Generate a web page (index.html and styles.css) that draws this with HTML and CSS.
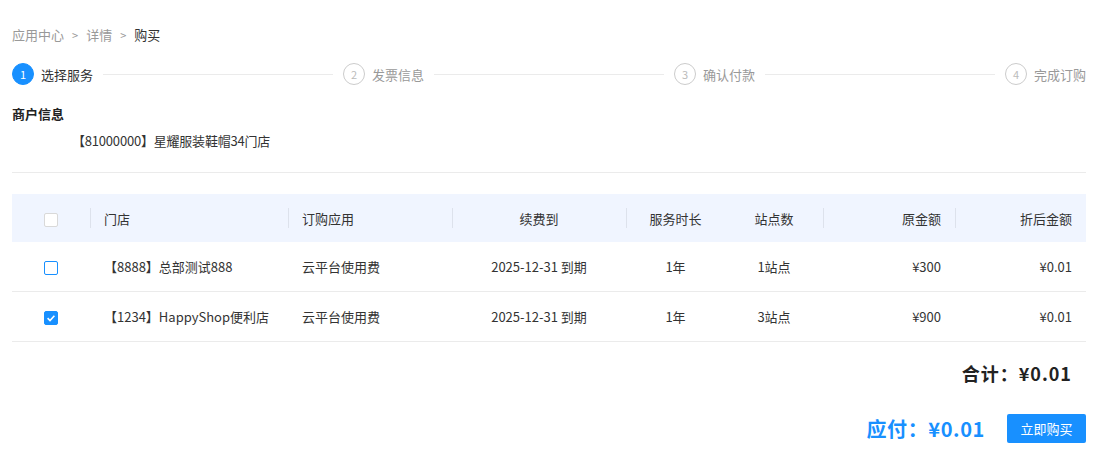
FILE: index.html
```html
<!DOCTYPE html>
<html lang="zh-CN">
<head>
<meta charset="utf-8">
<title>购买</title>
<link rel="stylesheet" href="styles.css">
</head>
<body>
<div class="page">
  <div class="breadcrumb">
    <span class="crumb">应用中心</span><span class="crumb-sep">&gt;</span><span class="crumb">详情</span><span class="crumb-sep">&gt;</span><span class="crumb current">购买</span>
  </div>

  <div class="steps">
    <div class="step active"><span class="step-icon">1</span><span class="step-title">选择服务</span><span class="step-line"></span></div>
    <div class="step"><span class="step-icon">2</span><span class="step-title">发票信息</span><span class="step-line"></span></div>
    <div class="step"><span class="step-icon">3</span><span class="step-title">确认付款</span><span class="step-line"></span></div>
    <div class="step"><span class="step-icon">4</span><span class="step-title">完成订购</span></div>
  </div>

  <div class="merchant">
    <div class="merchant-title">商户信息</div>
    <div class="merchant-name">【81000000】星耀服装鞋帽34门店</div>
  </div>

  <table class="grid">
    <colgroup>
      <col class="c-check"><col class="c-store"><col class="c-app"><col class="c-renew"><col class="c-dur"><col class="c-site"><col class="c-orig"><col class="c-final">
    </colgroup>
    <thead>
      <tr>
        <th class="center"><span class="checkbox"></span></th>
        <th class="left divided">门店</th>
        <th class="left divided">订购应用</th>
        <th class="center divided">续费到</th>
        <th class="center divided">服务时长</th>
        <th class="center">站点数</th>
        <th class="right divided">原金额</th>
        <th class="right divided">折后金额</th>
      </tr>
    </thead>
    <tbody>
      <tr>
        <td class="center"><span class="checkbox focus"></span></td>
        <td class="left">【8888】总部测试888</td>
        <td class="left">云平台使用费</td>
        <td class="center">2025-12-31&nbsp;到期</td>
        <td class="center">1年</td>
        <td class="center">1站点</td>
        <td class="right">¥300</td>
        <td class="right">¥0.01</td>
      </tr>
      <tr>
        <td class="center"><span class="checkbox checked"><svg viewBox="0 0 14 14" width="14" height="14"><path d="M3.6 7.2 L6 9.5 L10.4 4.8" fill="none" stroke="#fff" stroke-width="1.6"/></svg></span></td>
        <td class="left">【1234】HappyShop便利店</td>
        <td class="left">云平台使用费</td>
        <td class="center">2025-12-31&nbsp;到期</td>
        <td class="center">1年</td>
        <td class="center">3站点</td>
        <td class="right">¥900</td>
        <td class="right">¥0.01</td>
      </tr>
    </tbody>
  </table>

  <div class="total">合计：¥0.01</div>

  <div class="pay-bar">
    <span class="pay">应付：¥0.01</span>
    <button class="buy-btn">立即购买</button>
  </div>
</div>
</body>
</html>
```

FILE: styles.css
```css
html, body {
  margin: 0;
  padding: 0;
  background: #ffffff;
}

body {
  font-family: "Noto Sans CJK SC", "Noto Sans", sans-serif;
  font-size: 13px;
  color: #333333;
}

.page {
  padding: 23px 20px 0 12px;
}

/* breadcrumb */
.breadcrumb {
  display: flex;
  align-items: center;
  height: 24px;
  line-height: 24px;
}
.crumb {
  color: #999999;
}
.crumb.current {
  color: #333333;
}
.crumb-sep {
  color: #999999;
  font-size: 11px;
  margin: 0 8px;
}

/* steps */
.steps {
  display: flex;
  align-items: center;
  margin-top: 16px;
  height: 22px;
}
.step {
  flex: 1;
  display: flex;
  align-items: center;
  min-width: 0;
}
.step:last-child {
  flex: none;
}
.step-icon {
  width: 20px;
  height: 20px;
  border: 1px solid #cccccc;
  border-radius: 50%;
  display: flex;
  align-items: center;
  justify-content: center;
  font-size: 11px;
  color: #bbbbbb;
  flex: none;
}
.step-title {
  margin-left: 7px;
  color: #999999;
  white-space: nowrap;
}
.step-line {
  flex: 1;
  height: 1px;
  background: #ebebeb;
  margin: 0 10px 0 10px;
}
.step.active .step-icon {
  background: #1890ff;
  border-color: #1890ff;
  color: #ffffff;
}
.step.active .step-title {
  color: #333333;
}

/* merchant */
.merchant {
  margin-top: 19px;
  padding-bottom: 21px;
  border-bottom: 1px solid #ebebeb;
}
.merchant-title {
  font-weight: bold;
  line-height: 20px;
  color: #222222;
}
.merchant-name {
  margin-top: 7px;
  line-height: 20px;
  padding-left: 60px;
  color: #333333;
  letter-spacing: -0.2px;
}

/* table */
.grid {
  margin-top: 21px;
  width: 100%;
  border-collapse: collapse;
  table-layout: fixed;
}
.c-check { width: 78px; }
.c-store { width: 198px; }
.c-app { width: 164px; }
.c-renew { width: 174px; }
.c-dur { width: 99px; }
.c-site { width: 98px; }
.c-orig { width: 132px; }
.c-final { width: 131px; }

.grid th {
  background: #f0f5ff;
  height: 48px;
  font-weight: normal;
  font-size: 13px;
  color: #333333;
  padding: 0 14px;
  position: relative;
}
.grid th.divided::before {
  content: "";
  position: absolute;
  left: 0;
  top: 14px;
  width: 1px;
  height: 20px;
  background: #dde2ec;
}
.grid td {
  height: 49px;
  padding: 0 14px;
  border-bottom: 1px solid #ebebeb;
  color: #333333;
  white-space: nowrap;
}
.left { text-align: left; }
.center { text-align: center; }
.right { text-align: right; }

.checkbox {
  display: inline-block;
  width: 12px;
  height: 12px;
  border: 1px solid #d9d9d9;
  border-radius: 2px;
  background: #ffffff;
  vertical-align: middle;
}
.checkbox.focus {
  border-color: #1890ff;
}
.checkbox.checked {
  background: #1890ff;
  border-color: #1890ff;
}
.checkbox svg {
  display: block;
  margin: -1px;
}

/* totals */
.total {
  margin-top: 16px;
  line-height: 30px;
  text-align: right;
  padding-right: 14px;
  font-size: 18px;
  font-weight: bold;
  color: #222222;
  letter-spacing: 1px;
}

.pay-bar {
  margin-top: 26px;
  display: flex;
  justify-content: flex-end;
  align-items: center;
}
.pay {
  font-size: 20px;
  font-weight: bold;
  color: #1890ff;
  margin-right: 22px;
  letter-spacing: 0.6px;
}
.buy-btn {
  width: 79px;
  height: 29px;
  border: none;
  border-radius: 2px;
  background: #1890ff;
  color: #ffffff;
  font-family: inherit;
  font-size: 13px;
  padding: 0;
  cursor: pointer;
}
```
